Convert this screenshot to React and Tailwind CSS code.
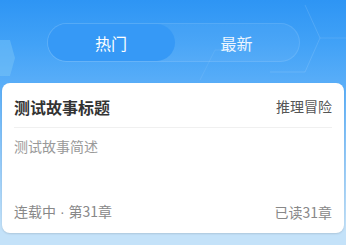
export default function App() {
  return (
    <div
      className="relative h-[245px] w-[346px] overflow-hidden bg-[linear-gradient(180deg,#2e95f4_0px,#42a2f7_45px,#5aaef8_85px,#8cc6f8_150px,#c4e2f9_232px)]"
      style={{ fontFamily: '"Noto Sans CJK SC", "Noto Sans", sans-serif' }}
    >
      <svg
        className="absolute inset-0"
        width="346"
        height="245"
        viewBox="0 0 346 245"
        fill="none"
      >
        <path d="M0 40 L10 40 L15 58 L10 76 L0 76 Z" fill="#7ec8f6" fillOpacity="0.45" />
        <path d="M305 5 L320 38 L305 72 L270 72" stroke="#ffffff" strokeOpacity="0.12" strokeWidth="1" />
        <path d="M320 38 L346 38" stroke="#ffffff" strokeOpacity="0.1" strokeWidth="1" />
        <path d="M200 80 L215 50 L250 50" stroke="#ffffff" strokeOpacity="0.08" strokeWidth="1" />
      </svg>

      <div className="relative flex flex-col pt-[23px]">
        <div className="mx-auto flex h-[39px] w-[253px] rounded-full border border-white/10 bg-white/5">
          <div className="flex w-[127px] items-center justify-center rounded-full bg-[#3699f6] text-[16px] text-white">
            热门
          </div>
          <div className="flex flex-1 items-center justify-center text-[16px] text-white/90">
            最新
          </div>
        </div>

        <div className="mx-[2px] mt-[21px] flex h-[150px] flex-col rounded-[8px] bg-white px-[12px] shadow-[0_1px_2px_rgba(0,0,0,0.12)]">
          <div className="flex h-[45px] items-center justify-between border-b border-[#f0f0f0] pt-[3px]">
            <span className="text-[16px] font-semibold text-[#333333]">测试故事标题</span>
            <span className="text-[14px] text-[#555555]">推理冒险</span>
          </div>
          <div className="pt-[8px] text-[14px] text-[#999999]">测试故事简述</div>
          <div className="mt-auto flex items-center justify-between pb-[10px] text-[14px] text-[#888888]">
            <span>
              连载中<span style={{ fontFamily: '"Liberation Sans", sans-serif' }}> · </span>第31章
            </span>
            <span>已读31章</span>
          </div>
        </div>
      </div>
    </div>
  );
}
